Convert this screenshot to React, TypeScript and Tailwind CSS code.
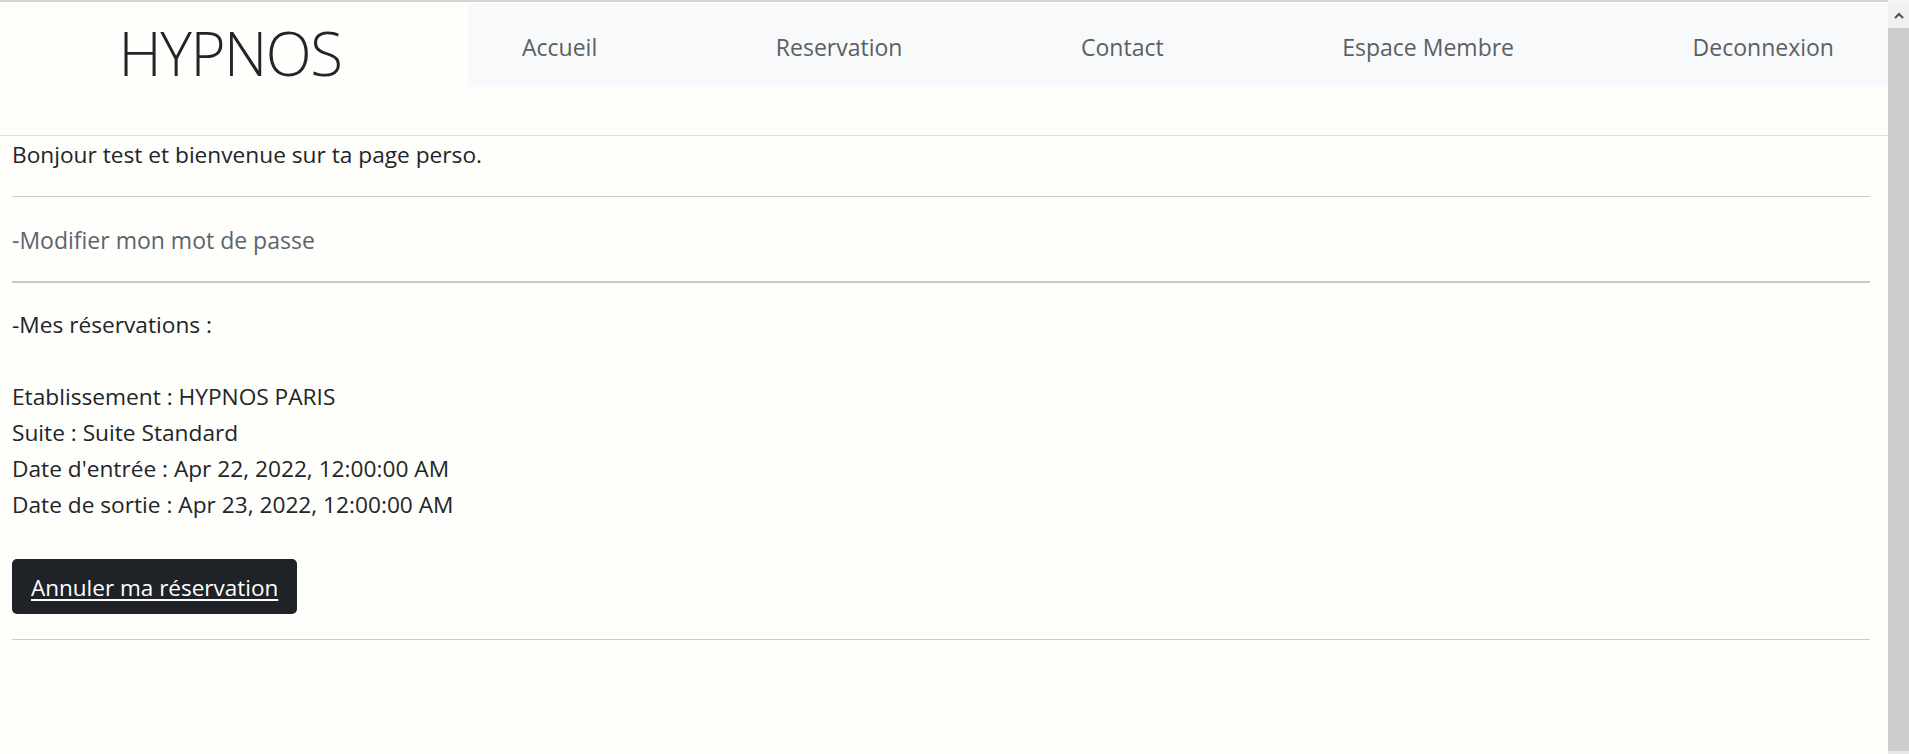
import React from "react";

const navLinks = [
  "Accueil",
  "Reservation",
  "Contact",
  "Espace Membre",
  "Deconnexion",
];

const reservation = [
  "Etablissement : HYPNOS PARIS",
  "Suite : Suite Standard",
  "Date d'entrée : Apr 22, 2022, 12:00:00 AM",
  "Date de sortie : Apr 23, 2022, 12:00:00 AM",
];

function Scrollbar() {
  return (
    <div className="flex w-[21px] shrink-0 flex-col bg-[#cdcdcd]">
      <div className="h-[3px] bg-[#f4f4f4]" />
      <div className="flex h-[25px] items-center justify-center bg-[#f0f0f0]">
        <svg width="10" height="7" viewBox="0 0 10 7">
          <path
            d="M1 6 L5 2 L9 6"
            fill="none"
            stroke="#505050"
            strokeWidth="2"
          />
        </svg>
      </div>
      <div className="flex-1" />
      <div className="h-[3px] bg-[#e8e8e8]" />
    </div>
  );
}

export default function App() {
  return (
    <div className="flex h-[754px] w-full overflow-hidden bg-[#fefefa] font-['Open_Sans',sans-serif] text-[#212529]">
      <div className="flex min-w-0 flex-1 flex-col">
        {/* browser top edge */}
        <div className="h-[2px] bg-[#d4d4d4]" />

        {/* Header */}
        <header className="flex h-[133px] items-start">
          <div className="flex w-[468px] shrink-0 justify-center pr-[8px] pt-[21px]">
            <span className="text-[60px] font-light leading-[60px] tracking-[-1.5px] text-[#212529]">
              HYPNOS
            </span>
          </div>
          <nav className="mt-[1px] flex h-[84px] flex-1 items-center justify-between bg-[#f8f9fa] px-[54px] pt-[3px]">
            {navLinks.map((link) => (
              <a
                key={link}
                href="#"
                className="text-[23px] leading-[30px] text-[#5a5f64]"
              >
                {link}
              </a>
            ))}
          </nav>
        </header>
        <div className="h-px bg-[#dedede]" />

        {/* Content */}
        <main className="pl-[12px] pr-[18px] text-[22.7px]">
          <p className="mt-[1px] leading-[36px]">
            Bonjour test et bienvenue sur ta page perso.
          </p>
          <div className="mt-[23px] h-px bg-[#cbcbcb]" />

          <a
            href="#"
            className="mt-[25px] block text-[23px] leading-[36px] text-[#5b6570]"
          >
            -Modifier mon mot de passe
          </a>
          <div className="mt-[23px] h-[2px] bg-[#c8c8c8]" />

          <section className="mt-[24px]">
            <p className="leading-[36px]">-Mes réservations :</p>
            <div className="h-[36px]" />
            {reservation.map((line) => (
              <p key={line} className="leading-[36px]">
                {line}
              </p>
            ))}

            <button
              type="button"
              className="mt-[36px] flex h-[55px] items-center rounded-[5px] bg-[#1f2226] px-[19px] pt-[2px] text-[22.5px] leading-[30px] text-white underline underline-offset-[3px]"
            >
              Annuler ma réservation
            </button>
          </section>
          <div className="mt-[25px] h-px bg-[#cbcbcb]" />
        </main>
      </div>
      <Scrollbar />
    </div>
  );
}
